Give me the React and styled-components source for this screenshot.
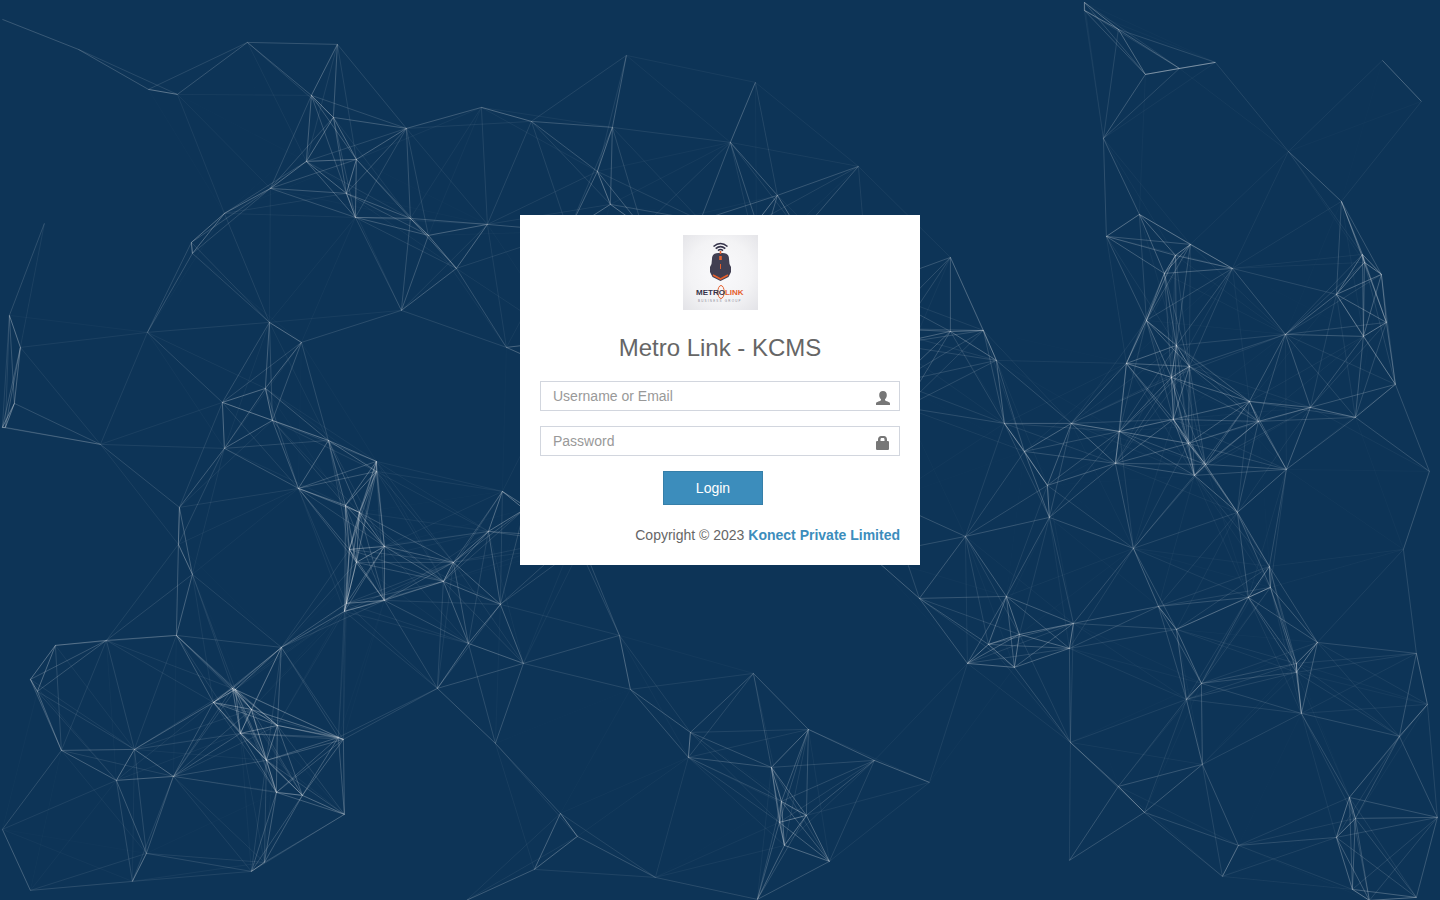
import React from 'react';
import styled, { createGlobalStyle } from 'styled-components';

const GlobalStyle = createGlobalStyle`
  *, *::before, *::after { box-sizing: border-box; }
  body {
    margin: 0;
    background: #0d3457;
    color: #666;
    font: 14px/20px "Liberation Sans", Arial, sans-serif;
  }
`;

const Page = styled.main`
  position: relative;
  display: flex;
  flex-direction: column;
  align-items: center;
  min-height: 100vh;
  padding: 215px 16px 0;
  overflow: hidden;
`;

const Backdrop = styled.svg`
  position: absolute;
  top: 0;
  left: 0;
  width: 100%;
  height: 100%;
  pointer-events: none;
`;

const Card = styled.section`
  position: relative;
  display: flex;
  flex-direction: column;
  width: 100%;
  max-width: 400px;
  padding: 20px;
  background: #fff;
`;

const Logo = styled.svg`
  display: block;
  align-self: center;
  width: 75px;
  height: 75px;
`;

const Title = styled.h1`
  margin: 20px 0 16px;
  color: #666;
  font-size: 24px;
  font-weight: 400;
  line-height: 35px;
  text-align: center;
`;

const Form = styled.form`
  display: flex;
  flex-direction: column;
  gap: 15px;
`;

const Field = styled.label`
  position: relative;
  display: block;
  height: 30px;
`;

const Input = styled.input`
  display: block;
  width: 100%;
  height: 30px;
  padding: 5px 42px 5px 12px;
  border: 1px solid #d2d6de;
  border-radius: 0;
  outline: none;
  background: #fff;
  color: #555;
  font: inherit;
  &::placeholder { color: #999; opacity: 1; }
  &:focus { border-color: #3c8dbc; }
`;

const FieldIcon = styled.svg`
  position: absolute;
  top: 10px;
  right: 10px;
  width: 14px;
  height: 14px;
  fill: #777;
`;

const Actions = styled.div`
  display: flex;
  justify-content: center;
  padding-right: 14px;
`;

const LoginButton = styled.button`
  width: 100px;
  height: 34px;
  padding: 0;
  border: 1px solid #367fa9;
  border-radius: 0;
  background: #3c8dbc;
  color: #fff;
  font: inherit;
  cursor: pointer;
`;

const Copyright = styled.footer`
  margin-top: 20px;
  text-align: right;
`;

const CompanyLink = styled.a`
  color: #3c8dbc;
  font-weight: 700;
  text-decoration: none;
`;

const LINK_DISTANCE = 150;
const LINK_OPACITY = 0.4;

const NODES = [
  [2,19],[78,49],[148,89],[177,94],[247,42],[337,44],[311,95],[333,117],[306,161],[356,159],
  [346,193],[355,217],[406,128],[270,188],[224,213],[191,242],[192,253],[410,218],[428,235],
  [456,268],[487,224],[401,310],[44,223],
  [9,315],[20,347],[14,403],[2,427],[5,427],[147,332],[100,444],[269,322],[301,342],[265,388],
  [222,402],[272,420],[224,448],[328,440],[298,488],[376,461],[376,471],[345,505],[359,512],
  [349,549],[356,562],[384,546],[384,600],[346,603],[344,611],[179,507],[178,544],[192,574],
  [453,562],[443,581],[500,604],[488,531],[502,491],[506,347],[524,509],
  [55,645],[30,679],[37,691],[106,640],[176,635],[61,750],[134,749],[116,780],[173,776],[2,829],
  [30,890],[132,881],[146,853],[251,871],[264,862],[232,688],[235,689],[213,702],[251,709],
  [240,733],[277,725],[266,760],[276,792],[302,795],[338,737],[343,739],[344,814],[281,647],
  [437,688],[468,643],[495,743],[523,663],
  [481,107],[531,121],[626,55],[612,127],[597,171],[610,204],[755,82],[730,142],[858,166],
  [777,195],[642,227],[568,231],[700,220],[756,222],[758,260],[800,233],[868,287],[880,328],
  [904,407],[896,382],[892,344],[574,537],[582,544],[565,340],[562,372],[870,555],[886,500],
  [619,635],[630,689],[753,673],[690,732],[688,757],[808,729],[771,767],[874,760],[781,801],
  [779,822],[806,815],[784,845],[829,861],[757,899],[655,877],[577,836],[560,813],[534,869],
  [466,900],[929,782],
  [1084,2],[1084,10],[1118,29],[1145,74],[1179,68],[1215,62],[1103,138],[1139,214],[1106,236],
  [1190,244],[1175,255],[1164,273],[1232,268],[1288,151],[1341,201],[1382,60],[1421,101],
  [1362,254],[1364,262],[1381,274],[1336,294],[950,257],
  [950,331],[983,330],[996,360],[1004,423],[1024,451],[1047,485],[1049,517],[1071,423],
  [1119,431],[1115,463],[1126,363],[1146,320],[1176,345],[1189,366],[1171,377],[1173,419],
  [1188,443],[1205,464],[1194,475],[1249,401],[1258,421],[1285,334],[1310,407],[1286,469],
  [1237,512],[1355,417],[1363,336],[1386,322],[1395,384],[1429,471],
  [965,536],[919,598],[1006,596],[1019,634],[988,644],[967,663],[1014,667],[1073,623],
  [1069,648],[1133,548],[1158,606],[1176,629],[1201,683],[1186,699],[1202,764],[1070,742],
  [1118,786],[1144,812],[1069,860],[1238,845],[1222,876],[1269,566],[1270,587],[1248,597],
  [1317,642],[1296,663],[1296,672],[1301,713],[1403,549],[1416,653],[1427,704],[1399,736],
  [1349,797],[1355,818],[1336,837],[1437,817],[1352,889],[1369,900],[1416,897],
];

const LINKS = NODES.flatMap(([x1, y1], i) =>
  NODES.slice(i + 1).flatMap(([x2, y2]) => {
    const distance = Math.hypot(x2 - x1, y2 - y1);
    if (distance >= LINK_DISTANCE) return [];
    return [{ x1, y1, x2, y2, opacity: LINK_OPACITY * (1 - distance / LINK_DISTANCE) }];
  })
);

function ParticleNetwork() {
  return (
    <Backdrop viewBox="0 0 1440 900" preserveAspectRatio="xMidYMid slice" aria-hidden="true">
      <g stroke="#fff" strokeWidth="1" transform="translate(.4 .4)">
        {LINKS.map(({ x1, y1, x2, y2, opacity }, i) => (
          <line key={i} x1={x1} y1={y1} x2={x2} y2={y2} strokeOpacity={opacity.toFixed(3)} />
        ))}
      </g>
    </Backdrop>
  );
}

function MetroLinkLogo() {
  return (
    <Logo viewBox="0 0 75 75" role="img" aria-label="Metro Link Business Group">
      <defs>
        <radialGradient id="paper" cx="50%" cy="48%" r="70%">
          <stop offset="0" stopColor="#fafafc" />
          <stop offset="0.6" stopColor="#f3f3f5" />
          <stop offset="1" stopColor="#e4e4e8" />
        </radialGradient>
      </defs>
      <rect width="75" height="75" fill="url(#paper)" />
      <g fill="none" stroke="#35334a" strokeWidth="1.6">
        <path d="M30.5 11.5Q37.5 5.5 44.5 11.5" />
        <path d="M32.7 13.6Q37.5 9.5 42.3 13.6" />
        <path d="M35 15.6Q37.5 13.4 40 15.6" />
      </g>
      <path
        fill="#413f52"
        d="M35.5 18C31 18 29 20 29 24L28.5 29 27 32V37L28.5 40 29.5 42 37.5 46 45.5 42 46.5 40 48 37V32L46.5 29 46 24C46 20 44 18 39.5 18Z"
      />
      <path d="M30 40L37.5 44 45 40" fill="none" stroke="#e5602d" strokeWidth="1.6" />
      <path d="M36.7 16H38.3V19H36.7ZM36.2 21H38.8V25H36.2ZM37 29H38V34H37Z" fill="#e5602d" />
      <ellipse cx="38" cy="57" rx="3.2" ry="6.5" fill="none" stroke="#e5602d" strokeWidth="1" />
      <text
        x="13" y="60" fontSize="8" fontWeight="700"
        fontFamily='"Liberation Sans", sans-serif'
      >
        <tspan fill="#35334a">METRO</tspan>
        <tspan fill="#e5602d">LINK</tspan>
      </text>
      <text
        x="15" y="67" fontSize="3" fill="#8b8995" letterSpacing="1.2"
        fontFamily='"Liberation Sans", sans-serif'
      >
        BUSINESS GROUP
      </text>
    </Logo>
  );
}

const UserIcon = () => (
  <FieldIcon viewBox="0 0 14 14" aria-hidden="true">
    <path d="M7 0C9.4 0 10.8 1.5 10.8 3.9C10.8 5.9 10 7.4 9 8.3V9.3C9.6 10.2 13.9 10.8 14 12.5V14H0V12.5C.1 10.8 4.4 10.2 5 9.3V8.3C4 7.4 3.2 5.9 3.2 3.9C3.2 1.5 4.6 0 7 0Z" />
  </FieldIcon>
);

const LockIcon = () => (
  <FieldIcon viewBox="0 0 14 14" aria-hidden="true">
    <path
      fillRule="evenodd"
      d="M2 5V3.5C2 1.2 3.5 0 5 0H8C9.7 0 11 1.2 11 3.5V5H12.2L13 5.8V13.2L12.2 14H.8L0 13.2V5.8L.8 5ZM4.5 5H8.5V3.5C8.5 2.5 8 2 7.3 2H5.7C5 2 4.5 2.5 4.5 3.5Z"
    />
  </FieldIcon>
);

export default function App() {
  return (
    <>
      <GlobalStyle />
      <Page>
        <ParticleNetwork />
        <Card>
          <MetroLinkLogo />
          <Title>Metro Link - KCMS</Title>
          <Form onSubmit={(event) => event.preventDefault()}>
            <Field>
              <Input type="text" placeholder="Username or Email" aria-label="Username or Email" />
              <UserIcon />
            </Field>
            <Field>
              <Input type="password" placeholder="Password" aria-label="Password" />
              <LockIcon />
            </Field>
            <Actions>
              <LoginButton type="submit">Login</LoginButton>
            </Actions>
          </Form>
          <Copyright>
            Copyright © 2023 <CompanyLink href="#">Konect Private Limited</CompanyLink>
          </Copyright>
        </Card>
      </Page>
    </>
  );
}
